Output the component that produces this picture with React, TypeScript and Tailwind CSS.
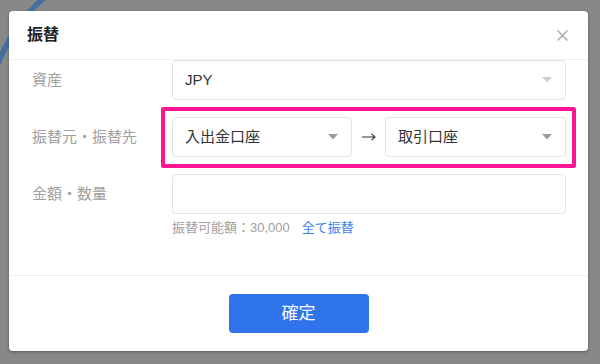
import React from "react";

const font = { fontFamily: '"Liberation Sans", "Noto Sans CJK JP", sans-serif' };

function Caret({ light }: { light?: boolean }) {
  return (
    <svg width="10" height="6" viewBox="0 0 10 6" className="shrink-0">
      <path d="M0 0 L10 0 L5 5.5 Z" fill={light ? "#cfcfcf" : "#9a9a9a"} />
    </svg>
  );
}

function SelectBox({ value, light, className }: { value: string; light?: boolean; className?: string }) {
  return (
    <div
      className={`h-[40px] flex items-center justify-between pl-[12px] pr-[13px] border border-[#e4e4e4] rounded-[4px] bg-white text-[15px] text-[#333] ${className ?? ""}`}
    >
      <span>{value}</span>
      <Caret light={light} />
    </div>
  );
}

export default function App() {
  return (
    <div className="relative w-[600px] h-[364px] overflow-hidden bg-[#888888]" style={font}>
      {/* background page remnants */}
      <svg className="absolute left-0 top-0" width="600" height="364" viewBox="0 0 600 364">
        <path d="M -2 64 A 161 161 0 0 1 46 -4" fill="none" stroke="#44709f" strokeWidth="5.5" />
        <line x1="0" y1="103.5" x2="600" y2="103.5" stroke="#838383" strokeWidth="1" />
        <line x1="0" y1="297.5" x2="600" y2="297.5" stroke="#838383" strokeWidth="1" />
      </svg>

      <div className="relative pt-[11px] pl-[9px]">
        <div className="w-[579px] h-[340px] bg-white rounded-[4px] shadow-[0_1px_3px_rgba(0,0,0,0.35)] flex flex-col">
          {/* header */}
          <div className="h-[49px] shrink-0 flex items-center justify-between pl-[18px] pr-[20px] border-b border-[#f1f1f1]">
            <span className="text-[16px] font-bold text-[#222] leading-none">振替</span>
            <svg width="11" height="11" viewBox="0 0 11 11">
              <path d="M0.5 0.5 L10.5 10.5 M10.5 0.5 L0.5 10.5" stroke="#a8a8a8" strokeWidth="1.4" />
            </svg>
          </div>

          {/* body */}
          <div className="flex-1 pl-[23px] pr-[22px]">
            <div className="flex items-center h-[40px]">
              <div className="w-[140px] shrink-0 text-[15px] text-[#a0a0a0]">資産</div>
              <SelectBox value="JPY" light className="flex-1" />
            </div>

            <div className="flex items-center h-[40px] mt-[17px]">
              <div className="w-[140px] shrink-0 text-[15px] text-[#a0a0a0]">振替元・振替先</div>
              <div className="relative flex-1 flex items-center">
                <SelectBox value="入出金口座" className="w-[180px]" />
                <div className="flex-1 flex justify-center">
                  <svg width="14" height="8" viewBox="0 0 14 8">
                    <path d="M0 4 H13 M9.5 0.8 L13 4 L9.5 7.2" fill="none" stroke="#333" strokeWidth="1.1" />
                  </svg>
                </div>
                <SelectBox value="取引口座" className="w-[181px]" />
                <div className="absolute left-[-11px] right-[-10px] top-[-10px] bottom-[-11px] border-[4px] border-[#ff1593] rounded-[2px] pointer-events-none" />
              </div>
            </div>

            <div className="flex items-center h-[40px] mt-[17px]">
              <div className="w-[140px] shrink-0 text-[15px] text-[#a0a0a0]">金額・数量</div>
              <div className="flex-1 h-[40px] border border-[#e4e4e4] rounded-[4px] bg-white" />
            </div>
            <div className="pl-[140px] mt-[4px] leading-[20px] text-[13px]">
              <span className="text-[#a0a0a0]">振替可能額：30,000</span>
              <span className="ml-[12px] text-[#3b7fe6]">全て振替</span>
            </div>
          </div>

          {/* footer */}
          <div className="h-[76px] shrink-0 border-t border-[#f1f1f1] flex items-center justify-center">
            <button className="w-[140px] h-[39px] rounded-[4px] bg-[#2f74eb] text-white text-[17px]">確定</button>
          </div>
        </div>
      </div>
    </div>
  );
}
